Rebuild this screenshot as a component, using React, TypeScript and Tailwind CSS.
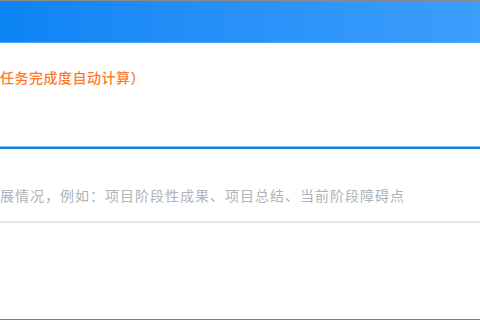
export default function App() {
  return (
    <div className="w-[480px] h-[320px] bg-white overflow-hidden flex flex-col" style={{ fontFamily: '"Noto Sans CJK SC", "Noto Sans", sans-serif' }}>
      <div className="h-px bg-[#8a8a8a]" />
      <div className="h-[42px] bg-gradient-to-r from-[#0b84f4] to-[#3b9efd] border-b border-[#4aa6ff]" />
      <div className="h-[103px] flex flex-col">
        <div className="pt-[26px] text-[14px] leading-[16px] font-medium tracking-[0.5px] text-[#ff7a28] whitespace-nowrap">任务完成度自动计算）</div>
      </div>
      <div className="h-px bg-[#7fc0f5]" />
      <div className="h-[2px] bg-[#1a7ed8]" />
      <div className="h-[72px] flex flex-col">
        <div className="pt-[38px] text-[14px] leading-[16px] tracking-[1px] text-[#aeb3b9] whitespace-nowrap">展情况，例如：项目阶段性成果、项目总结、当前阶段障碍点</div>
      </div>
      <div className="h-[2px] bg-[#e6e6e6]" />
      <div className="flex-1" />
      <div className="h-px bg-[#7a7a7a]" />
    </div>
  )
}
